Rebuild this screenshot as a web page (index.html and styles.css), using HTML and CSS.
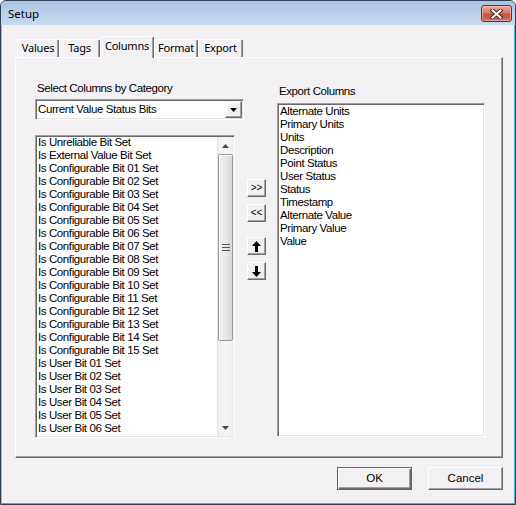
FILE: index.html
```html
<!DOCTYPE html>
<html>
<head>
<meta charset="utf-8">
<link rel="stylesheet" href="styles.css">
</head>
<body>
<div class="window">
  <div class="titlebar">
    <span class="title">Setup</span>
    <div class="close">
      <svg width="13" height="10" viewBox="0 0 13 10">
        <path d="M2.5 1.5 L10.5 8.5 M10.5 1.5 L2.5 8.5" stroke="#4b2a2a" stroke-width="4" stroke-linecap="square"/>
        <path d="M2.5 1.5 L10.5 8.5 M10.5 1.5 L2.5 8.5" stroke="#ffffff" stroke-width="2" stroke-linecap="square"/>
      </svg>
    </div>
  </div>
  <div class="client">
    <div class="tabs">
      <div class="tab w-values">Values</div>
      <div class="tab w-tags">Tags</div>
      <div class="tab active w-columns">Columns</div>
      <div class="tab w-format">Format</div>
      <div class="tab w-export">Export</div>
    </div>
    <div class="panel">
      <div class="col-left">
        <div class="label">Select Columns by Category</div>
        <div class="combo">
          <span class="combo-text">Current Value Status Bits</span>
          <span class="combo-btn">
            <svg width="7" height="4" viewBox="0 0 7 4"><path d="M0 0 H7 L3.5 4 Z" fill="#000"/></svg>
          </span>
        </div>
        <div class="listbox list-left">
          <div class="items">
            <div>Is Unreliable Bit Set</div>
            <div>Is External Value Bit Set</div>
            <div>Is Configurable Bit 01 Set</div>
            <div>Is Configurable Bit 02 Set</div>
            <div>Is Configurable Bit 03 Set</div>
            <div>Is Configurable Bit 04 Set</div>
            <div>Is Configurable Bit 05 Set</div>
            <div>Is Configurable Bit 06 Set</div>
            <div>Is Configurable Bit 07 Set</div>
            <div>Is Configurable Bit 08 Set</div>
            <div>Is Configurable Bit 09 Set</div>
            <div>Is Configurable Bit 10 Set</div>
            <div>Is Configurable Bit 11 Set</div>
            <div>Is Configurable Bit 12 Set</div>
            <div>Is Configurable Bit 13 Set</div>
            <div>Is Configurable Bit 14 Set</div>
            <div>Is Configurable Bit 15 Set</div>
            <div>Is User Bit 01 Set</div>
            <div>Is User Bit 02 Set</div>
            <div>Is User Bit 03 Set</div>
            <div>Is User Bit 04 Set</div>
            <div>Is User Bit 05 Set</div>
            <div>Is User Bit 06 Set</div>
            <div>Is User Bit 07 Set</div>
          </div>
          <div class="vscroll">
            <div class="sb-arrow">
              <svg width="7" height="4" viewBox="0 0 7 4"><path d="M3.5 0 L7 4 H0 Z" fill="#4a4a4a"/></svg>
            </div>
            <div class="sb-track">
              <div class="thumb">
                <svg width="8" height="7" viewBox="0 0 8 7"><path d="M0 .5 H8 M0 3.5 H8 M0 6.5 H8" stroke="#555" stroke-width="1"/></svg>
              </div>
            </div>
            <div class="sb-arrow">
              <svg width="7" height="4" viewBox="0 0 7 4"><path d="M0 0 H7 L3.5 4 Z" fill="#4a4a4a"/></svg>
            </div>
          </div>
        </div>
      </div>
      <div class="col-mid">
        <div class="mbtn">&gt;&gt;</div>
        <div class="mbtn gap-s">&lt;&lt;</div>
        <div class="mbtn gap-l">
          <svg width="9" height="11" viewBox="0 0 9 11"><path d="M4.5 0 L9 5 H6 V11 H3 V5 H0 Z" fill="#000"/></svg>
        </div>
        <div class="mbtn gap-s">
          <svg width="9" height="11" viewBox="0 0 9 11"><path d="M3 0 H6 V6 H9 L4.5 11 L0 6 H3 Z" fill="#000"/></svg>
        </div>
      </div>
      <div class="col-right">
        <div class="label">Export Columns</div>
        <div class="listbox list-right">
          <div class="items">
            <div>Alternate Units</div>
            <div>Primary Units</div>
            <div>Units</div>
            <div>Description</div>
            <div>Point Status</div>
            <div>User Status</div>
            <div>Status</div>
            <div>Timestamp</div>
            <div>Alternate Value</div>
            <div>Primary Value</div>
            <div>Value</div>
          </div>
        </div>
      </div>
    </div>
    <div class="footer">
      <div class="btn default">OK</div>
      <div class="btn">Cancel</div>
    </div>
  </div>
</div>
</body>
</html>
```
FILE: styles.css
```css
html, body {
  margin: 0;
  padding: 0;
  background: #ffffff;
}
body {
  width: 516px;
  height: 505px;
  overflow: hidden;
}
.window {
  box-sizing: border-box;
  width: 516px;
  height: 505px;
  border: 1px solid #2f3e50;
  border-radius: 6px 6px 0 0;
  display: flex;
  flex-direction: column;
  overflow: hidden;
  background: #bcd2ec;
}
.titlebar {
  flex: none;
  height: 24px;
  display: flex;
  align-items: flex-start;
  background: linear-gradient(#a9c3e2, #bdd3ec 60%, #c6daef);
}
.title {
  margin: 5px 0 0 7px;
  font: 11.5px/16px "Noto Sans", sans-serif;
  color: #000;
}
.close {
  box-sizing: border-box;
  margin: 4px 3px 0 auto;
  width: 31px;
  height: 17px;
  border: 1px solid #6e2b27;
  border-radius: 3px;
  background: linear-gradient(#e9a797 0%, #d87b69 45%, #c4503d 55%, #d0705c 100%);
  box-shadow: inset 0 0 0 1px rgba(255, 220, 210, 0.45);
  display: flex;
  align-items: center;
  justify-content: center;
}
.close svg {
  display: block;
}
.client {
  flex: 1;
  display: flex;
  flex-direction: column;
  background: #f4f1f5;
  border-left: 1px solid #9bb7d8;
  border-right: 1px solid #3cb4e4;
  border-bottom: 1px solid #3cb4e4;
  padding: 11px 11px 0 13px;
}
.tabs {
  flex: none;
  height: 21px;
  display: flex;
  align-items: flex-end;
  padding-left: 2px;
  position: relative;
  z-index: 2;
  font: 11px "Noto Sans", sans-serif;
  letter-spacing: -0.2px;
  color: #000;
}
.tab {
  box-sizing: border-box;
  height: 18px;
  border: 1px solid #ffffff;
  border-bottom: none;
  border-right-color: #6a6a6a;
  box-shadow: inset -1px 0 #a0a0a0;
  border-radius: 2px 2px 0 0;
  background: #f4f1f5;
  text-align: center;
  line-height: 16px;
}
.tab.active {
  height: 22px;
  margin-bottom: -1px;
  line-height: 17px;
}
.w-values { width: 42px; }
.w-tags { width: 41px; }
.w-columns { width: 54px; }
.w-format { width: 44px; }
.w-export { width: 45px; }
.panel {
  flex: none;
  box-sizing: border-box;
  height: 401px;
  border: 1px solid #ffffff;
  border-right-color: #696969;
  border-bottom-color: #696969;
  box-shadow: inset -1px -1px #a0a0a0;
  display: flex;
  align-items: flex-start;
  padding: 24px 0 0 19px;
  font: 11.5px "Liberation Sans", Arial, sans-serif;
  letter-spacing: -0.4px;
  color: #000;
}
.col-left {
  width: 209px;
  display: flex;
  flex-direction: column;
}
.label {
  height: 13px;
  line-height: 13px;
  padding-left: 2px;
  white-space: nowrap;
}
.combo {
  margin-top: 4px;
  box-sizing: border-box;
  height: 21px;
  border: 1px solid;
  border-color: #a0a0a0 #ffffff #ffffff #a0a0a0;
  box-shadow: inset 1px 1px #696969, inset -1px -1px #e3e3e3;
  background: #ffffff;
  display: flex;
  align-items: center;
  padding: 1px;
}
.combo-text {
  flex: 1;
  padding-left: 1px;
  line-height: 13px;
  white-space: nowrap;
}
.combo-btn {
  box-sizing: border-box;
  width: 17px;
  height: 17px;
  border: 1px solid;
  border-color: #f4f4f4 #696969 #696969 #f4f4f4;
  box-shadow: inset -1px -1px #a0a0a0, inset 1px 1px #ffffff;
  background: #f0f0f0;
  display: flex;
  align-items: center;
  justify-content: center;
}
.combo-btn svg {
  display: block;
}
.listbox {
  box-sizing: border-box;
  border: 1px solid;
  border-color: #a0a0a0 #ffffff #ffffff #a0a0a0;
  box-shadow: inset 1px 1px #696969, inset -1px -1px #e3e3e3;
  background: #ffffff;
  display: flex;
  overflow: hidden;
}
.list-left {
  margin-top: 15px;
  width: 200px;
  height: 303px;
}
.items {
  flex: 1;
  min-width: 0;
  overflow: hidden;
  padding-left: 2px;
  line-height: 13px;
  white-space: nowrap;
}
.vscroll {
  flex: none;
  width: 17px;
  margin: 1px 0;
  display: flex;
  flex-direction: column;
  background: linear-gradient(to right, #e2e2e2 0, #e2e2e2 1px, #efefef 1px, #f6f6f6 50%, #efefef 100%);
}
.sb-arrow {
  flex: none;
  height: 17px;
  display: flex;
  align-items: center;
  justify-content: center;
}
.sb-arrow svg {
  display: block;
}
.sb-track {
  flex: 1;
  display: flex;
  flex-direction: column;
}
.thumb {
  box-sizing: border-box;
  height: 187px;
  margin: 0 1px;
  border: 1px solid #9a9a9a;
  border-radius: 2px;
  background: linear-gradient(to right, #f3f3f3, #e9e9e9 50%, #d9d9d9);
  box-shadow: inset 1px 1px #ffffff;
  display: flex;
  align-items: center;
  justify-content: center;
}
.thumb svg {
  display: block;
}
.col-mid {
  width: 19px;
  margin: 97px 0 0 3px;
  display: flex;
  flex-direction: column;
}
.mbtn {
  box-sizing: border-box;
  width: 19px;
  height: 18px;
  border: 1px solid;
  border-color: #ffffff #696969 #696969 #ffffff;
  box-shadow: inset -1px -1px #a0a0a0;
  background: #f0eff1;
  display: flex;
  align-items: center;
  justify-content: center;
  font: 10px/1 "Liberation Sans", Arial, sans-serif;
  letter-spacing: 0;
}
.mbtn svg {
  display: block;
}
.gap-s {
  margin-top: 7px;
}
.gap-l {
  margin-top: 15px;
}
.col-right {
  width: 208px;
  margin: 3px 0 0 11px;
  display: flex;
  flex-direction: column;
}
.list-right {
  margin-top: 5px;
  height: 334px;
  padding-top: 1px;
}
.list-right .items {
  padding-left: 2px;
}
.footer {
  flex: none;
  margin-top: 9px;
  display: flex;
  justify-content: flex-end;
  gap: 16px;
}
.btn {
  box-sizing: border-box;
  width: 75px;
  height: 23px;
  border: 1px solid;
  border-color: #ffffff #696969 #696969 #ffffff;
  box-shadow: inset -1px -1px #a0a0a0;
  background: #f3f1f3;
  font: 11.5px/21px "Liberation Sans", Arial, sans-serif;
  text-align: center;
  color: #000;
}
.btn.default {
  border-color: #646464;
  box-shadow: inset 1px 1px #ffffff, inset -1px -1px #696969, inset -2px -2px #a0a0a0;
}
```
